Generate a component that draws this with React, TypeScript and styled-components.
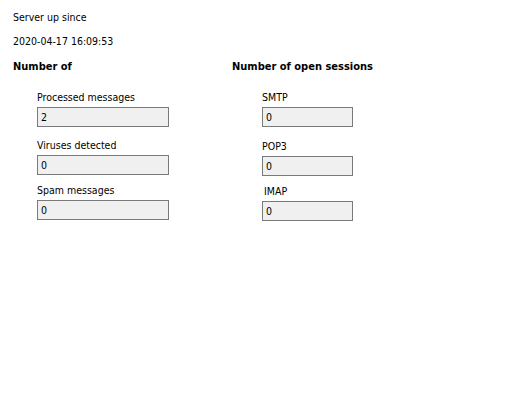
import type React from "react"
import styled, { createGlobalStyle } from "styled-components"

const GlobalStyle = createGlobalStyle`
  html, body {
    margin: 0;
    padding: 0;
    background: #ffffff;
  }
  body {
    font-family: "DejaVu Sans Condensed", "DejaVu Sans", Tahoma, sans-serif;
    font-size: 10.5px;
    color: #000000;
  }
`

type Stat = { label: string; value: string; gap: number; shift?: number }

const counters: Stat[] = [
  { label: "Processed messages", value: "2", gap: 17 },
  { label: "Viruses detected", value: "0", gap: 12 },
  { label: "Spam messages", value: "0", gap: 9 },
]

const sessions: Stat[] = [
  { label: "SMTP", value: "0", gap: 17 },
  { label: "POP3", value: "0", gap: 13 },
  { label: "IMAP", value: "0", gap: 9, shift: 2 },
]

const App: React.FC = () => {
  return (
    <Page>
      <GlobalStyle />
      <Line>Server up since</Line>
      <Line $top={10}>2020-04-17 16:09:53</Line>
      <Columns>
        <Column>
          <Heading>Number of</Heading>
          <Fields $indent={24} $width={132}>
            {counters.map((s) => (
              <Field key={s.label} $gap={s.gap}>
                <Label $shift={s.shift ?? 0}>{s.label}</Label>
                <ValueBox>{s.value}</ValueBox>
              </Field>
            ))}
          </Fields>
        </Column>
        <Column>
          <Heading>Number of open sessions</Heading>
          <Fields $indent={30} $width={91}>
            {sessions.map((s) => (
              <Field key={s.label} $gap={s.gap}>
                <Label $shift={s.shift ?? 0}>{s.label}</Label>
                <ValueBox>{s.value}</ValueBox>
              </Field>
            ))}
          </Fields>
        </Column>
      </Columns>
    </Page>
  )
}

const Page = styled.div`
  width: 510px;
  height: 396px;
  box-sizing: border-box;
  padding: 10px 13px;
  background: #ffffff;
`

const Line = styled.div<{ $top?: number }>`
  line-height: 14px;
  margin-top: ${(p) => p.$top ?? 0}px;
`

const Columns = styled.div`
  display: grid;
  grid-template-columns: 219px 1fr;
  margin-top: 12px;
`

const Column = styled.div`
  display: flex;
  flex-direction: column;
`

const Heading = styled.div`
  font-weight: bold;
  font-size: 11px;
  line-height: 14px;
`

const Fields = styled.div<{ $indent: number; $width: number }>`
  display: flex;
  flex-direction: column;
  padding-left: ${(p) => p.$indent}px;
  width: ${(p) => p.$width}px;
`

const Field = styled.div<{ $gap: number }>`
  display: flex;
  flex-direction: column;
  gap: 3px;
  margin-top: ${(p) => p.$gap}px;
`

const Label = styled.div<{ $shift: number }>`
  line-height: 13px;
  padding-left: ${(p) => p.$shift}px;
`

const ValueBox = styled.div`
  height: 20px;
  box-sizing: border-box;
  border: 1px solid #7a7a7a;
  background: #f0f0f0;
  padding: 0 3px;
  line-height: 18px;
`

export default App
